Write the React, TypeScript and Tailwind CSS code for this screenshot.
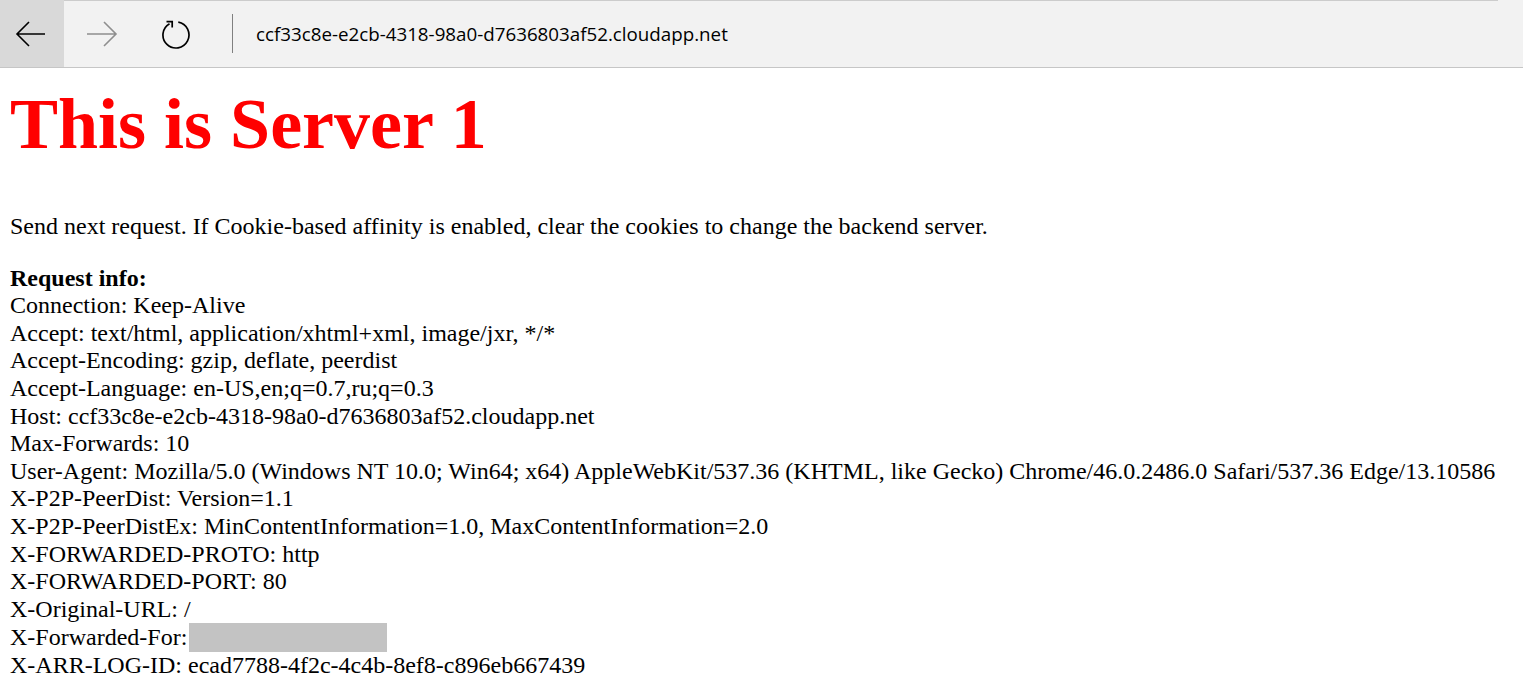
import { ReactNode } from "react";

const headers: [string, string][] = [
  ["Connection", "Keep-Alive"],
  ["Accept", "text/html, application/xhtml+xml, image/jxr, */*"],
  ["Accept-Encoding", "gzip, deflate, peerdist"],
  ["Accept-Language", "en-US,en;q=0.7,ru;q=0.3"],
  ["Host", "ccf33c8e-e2cb-4318-98a0-d7636803af52.cloudapp.net"],
  ["Max-Forwards", "10"],
  [
    "User-Agent",
    "Mozilla/5.0 (Windows NT 10.0; Win64; x64) AppleWebKit/537.36 (KHTML, like Gecko) Chrome/46.0.2486.0 Safari/537.36 Edge/13.10586",
  ],
  ["X-P2P-PeerDist", "Version=1.1"],
  ["X-P2P-PeerDistEx", "MinContentInformation=1.0, MaxContentInformation=2.0"],
  ["X-FORWARDED-PROTO", "http"],
  ["X-FORWARDED-PORT", "80"],
  ["X-Original-URL", "/"],
];

function NavButton({ children, className }: { children: ReactNode; className: string }) {
  return <div className={`h-full flex items-center justify-center ${className}`}>{children}</div>;
}

function AddressBar() {
  return (
    <div className="h-[68px] bg-[#f2f2f2] border-b border-[#c6c6c6] flex relative">
      {/* thin top rule, stops short of the right edge */}
      <div className="absolute top-0 left-16 w-[1434px] h-px bg-[#cccccc]" />
      <NavButton className="w-16 bg-[#d9d9d9] pr-[3px]">
        <svg width="32" height="32" viewBox="0 0 32 32" fill="none" stroke="#000" strokeWidth="1.6">
          <path d="M30 16H2M14 4L2 16l12 12" />
        </svg>
      </NavButton>
      <NavButton className="w-[76px]">
        <svg width="32" height="32" viewBox="0 0 32 32" fill="none" stroke="#8f8f8f" strokeWidth="1.6">
          <path d="M1 16h29M18 4l12 12-12 12" />
        </svg>
      </NavButton>
      <NavButton className="w-[71px] pt-[2px]">
        <svg width="30" height="30" viewBox="-1 -1 30 30" fill="none" stroke="#000" strokeWidth="1.7">
          <path d="M7.5 2.7A13 13 0 1 0 16.3 1.2" />
          <path d="M4.5 0.6h5.7v6" />
        </svg>
      </NavButton>
      <div className="flex items-center pl-[21px]">
        <div className="w-px h-[39px] bg-[#808080]" />
        <span className="ml-[23px] pt-[2px] text-[18.75px] text-black font-['Open_Sans',sans-serif]">
          ccf33c8e-e2cb-4318-98a0-d7636803af52.cloudapp.net
        </span>
      </div>
    </div>
  );
}

export default function App() {
  return (
    <div className="min-h-screen bg-white font-['Liberation_Serif','Times_New_Roman',serif] text-black">
      <AddressBar />
      <div className="px-[10px]">
        <h1 className="pt-[15px] text-[72px] font-bold text-[#ff0000] leading-[83px]">
          This is Server 1
        </h1>
        <p className="mt-[47px] text-[24px] leading-[27.6px]">
          Send next request. If Cookie-based affinity is enabled, clear the cookies to change the
          backend server.
        </p>
        <div className="mt-[24px] text-[24px] leading-[27.6px] whitespace-nowrap">
          <div className="font-bold">Request info:</div>
          {headers.map(([k, v]) => (
            <div key={k}>
              {k}: {v}
            </div>
          ))}
          <div className="flex items-center">
            X-Forwarded-For:&nbsp;
            <span className="inline-block w-[198px] h-[29px] bg-[#c3c3c3] -ml-[4px]" />
          </div>
          <div>X-ARR-LOG-ID: ecad7788-4f2c-4c4b-8ef8-c896eb667439</div>
        </div>
      </div>
    </div>
  );
}
